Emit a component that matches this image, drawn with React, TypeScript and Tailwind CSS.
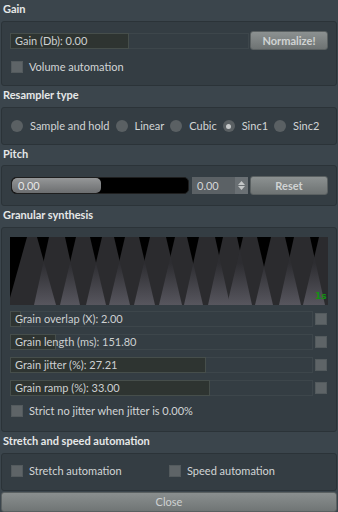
import React from "react";

type Grain = { c: number; a: number; b: number };
const H = 68;
const W = 318;
const grains: Grain[] = [
  { c: 22, a: 5, b: 24 },
  { c: 47, a: 8, b: 23 },
  { c: 73, a: 7, b: 23 },
  { c: 98, a: 6, b: 22 },
  { c: 122, a: 7, b: 23 },
  { c: 148, a: 8, b: 24 },
  { c: 171, a: 6, b: 22 },
  { c: 197, a: 8, b: 23 },
  { c: 220, a: 7, b: 22 },
  { c: 240, a: 7, b: 23 },
  { c: 268, a: 7, b: 23 },
  { c: 292, a: 8, b: 23 },
  { c: 316, a: 7, b: 23 },
];

function grainPoly(g: Grain) {
  return `${g.c - g.a},0 ${g.c + g.a},0 ${g.c + g.b},${H} ${g.c - g.b},${H}`;
}

function overlapPoly(l: Grain, r: Grain): string | null {
  const R = (t: number) => l.c + l.a + (l.b - l.a) * t;
  const L = (t: number) => r.c - r.a - (r.b - r.a) * t;
  if (R(1) <= L(1)) return null;
  if (R(0) >= L(0)) {
    return `${L(0)},0 ${R(0)},0 ${R(1)},${H} ${L(1)},${H}`;
  }
  const t = (r.c - r.a - l.c - l.a) / (l.b - l.a + r.b - r.a);
  return `${R(t)},${t * H} ${R(1)},${H} ${L(1)},${H}`;
}

function GrainCanvas() {
  const overlaps: string[] = [];
  for (let i = 0; i < grains.length; i++) {
    for (let j = i + 1; j < grains.length; j++) {
      const p = overlapPoly(grains[i], grains[j]);
      if (p) overlaps.push(p);
    }
  }
  return (
    <svg width={W} height={H} viewBox={`0 0 ${W} ${H}`} className="block bg-black">
      <defs>
        <linearGradient id="ov" gradientUnits="userSpaceOnUse" x1="0" y1="26" x2="0" y2="68">
          <stop offset="0" stopColor="#2d2d31" />
          <stop offset="1" stopColor="#57565e" />
        </linearGradient>
      </defs>
      {grains.map((g, i) => (
        <polygon key={i} points={grainPoly(g)} fill="#2b2b2e" />
      ))}
      {overlaps.map((p, i) => (
        <polygon key={i} points={p} fill="url(#ov)" />
      ))}
      <text x="305" y="62" fill="#139013" fontSize="9" fontWeight="bold" fontFamily="DejaVu Sans, sans-serif">
        1s
      </text>
    </svg>
  );
}

function Title({ children, h = "h-[21px]" }: { children: React.ReactNode; h?: string }) {
  return (
    <div className={h + " pt-[2px] pl-[3px] leading-[14px] font-bold text-[#e6e8e8] shrink-0 whitespace-nowrap"}>
      {children}
    </div>
  );
}

function Box({ className, children }: { className: string; children: React.ReactNode }) {
  return (
    <div
      className={
        "mx-[1px] shrink-0 rounded-[3px] border border-[#2b3338] bg-[#343d43] px-[8px] " + className
      }
    >
      {children}
    </div>
  );
}

function Check({ label }: { label?: string }) {
  return (
    <div className="flex items-center gap-[6px] h-[12px]">
      <span className="w-[12px] h-[12px] ml-[1px] bg-[#5e6467] border border-[#535a5d] shrink-0" />
      {label && <span className="leading-[12px] text-[#d2d5d6] whitespace-nowrap">{label}</span>}
    </div>
  );
}

function Radio({ label, on }: { label: string; on?: boolean }) {
  return (
    <div className="flex items-center gap-[7px] shrink-0">
      <span className="w-[12px] h-[12px] rounded-full bg-[#5a6063] flex items-center justify-center shrink-0">
        {on && <span className="w-[5px] h-[5px] rounded-full bg-[#c6c9ca]" />}
      </span>
      <span className="leading-[12px] text-[#d2d5d6] whitespace-nowrap">{label}</span>
    </div>
  );
}

function ValueBar({ label, fill }: { label: string; fill: number }) {
  return (
    <div className="relative flex-1 h-[16px] border border-[#3d464b]">
      <div
        className="absolute left-[-1px] top-[-1px] h-[16px] bg-[#2e3431] border border-[#464e4b]"
        style={{ width: fill }}
      />
      <span className="absolute left-[4px] top-0 leading-[14px] text-[#cdd0d1] whitespace-nowrap">{label}</span>
    </div>
  );
}

const rows: [string, number][] = [
  ["Grain overlap (X): 2.00", 11],
  ["Grain length (ms): 151.80", 46],
  ["Grain jitter (%): 27.21", 196],
  ["Grain ramp (%): 33.00", 200],
];

export default function App() {
  return (
    <div className="w-[338px] h-[512px] overflow-hidden bg-[#3b454c] flex flex-col font-['Lato',sans-serif] text-[11px] text-[#d2d5d6]">
      <Title>Gain</Title>
      <Box className="h-[65px] pt-[9px]">
        <div className="flex items-center h-[19px] gap-[1px]">
          <ValueBar label="Gain (Db): 0.00" fill={119} />
          <button className="w-[78px] h-[19px] rounded-[3px] border border-[#5a6061] bg-gradient-to-b from-[#8c9191] to-[#6e7373] font-bold text-[#d0d3d3] leading-[17px]">
            Normalize!
          </button>
        </div>
        <div className="mt-[11px]">
          <Check label="Volume automation" />
        </div>
      </Box>
      <Title>Resampler type</Title>
      <Box className="h-[38px] pt-[12px]">
        <div className="flex items-center gap-[6px] ml-[1px] whitespace-nowrap">
          <Radio label="Sample and hold" />
          <Radio label="Linear" />
          <Radio label="Cubic" />
          <Radio label="Sinc1" on />
          <Radio label="Sinc2" />
        </div>
      </Box>
      <Title h="h-[20px]">Pitch</Title>
      <Box className="h-[41px] pt-[10px]">
        <div className="flex items-center h-[19px]">
          <div className="ml-[1px] flex-1 h-[17px] rounded-[5px] bg-black border border-[#1e1e1e] relative overflow-hidden">
            <div className="absolute left-0 top-0 bottom-0 w-[89px] rounded-[5px] bg-gradient-to-b from-[#959798] to-[#6c6e70]" />
            <span className="absolute left-[6px] top-0 leading-[15px] text-[#e6e6e6]">0.00</span>
          </div>
          <div className="ml-[3px] w-[56px] h-[17px] flex bg-[#5b6165]">
            <span className="flex-1 pl-[5px] leading-[17px] text-[#d4d6d7]">0.00</span>
            <span className="w-[13px] h-[17px] bg-[#6a7074] flex flex-col items-center justify-center gap-[1px]">
              <svg width="7" height="4" viewBox="0 0 7 4">
                <path d="M0 4 L3.5 0 L7 4 Z" fill="#c3c6c7" />
              </svg>
              <svg width="7" height="4" viewBox="0 0 7 4">
                <path d="M0 0 L3.5 4 L7 0 Z" fill="#c3c6c7" />
              </svg>
            </span>
          </div>
          <button className="ml-[2px] w-[78px] h-[19px] rounded-[3px] border border-[#5a6061] bg-gradient-to-b from-[#8c9191] to-[#6e7373] font-bold text-[#d0d3d3] leading-[17px]">
            Reset
          </button>
        </div>
      </Box>
      <Title>Granular synthesis</Title>
      <Box className="h-[205px] pt-[9px]">
        <GrainCanvas />
        <div className="mt-[6px] flex flex-col gap-[7px]">
          {rows.map(([l, f]) => (
            <div key={l} className="flex items-center gap-[2px] h-[16px]">
              <ValueBar label={l} fill={f} />
              <span className="w-[12px] h-[12px] mr-[1px] bg-[#5e6467] border border-[#535a5d] shrink-0" />
            </div>
          ))}
        </div>
        <div className="mt-[9px]">
          <Check label="Strict no jitter when jitter is 0.00%" />
        </div>
      </Box>
      <Title>Stretch and speed automation</Title>
      <Box className="h-[38px] pt-[11px]">
        <div className="flex">
          <div className="w-[158px]">
            <Check label="Stretch automation" />
          </div>
          <Check label="Speed automation" />
        </div>
      </Box>
      <button className="mt-[1px] mx-[1px] h-[20px] shrink-0 rounded-[3px] border border-[#5a6061] bg-gradient-to-b from-[#8a8f8f] to-[#707575] text-[#cfd2d2] leading-[18px]">
        Close
      </button>
    </div>
  );
}
